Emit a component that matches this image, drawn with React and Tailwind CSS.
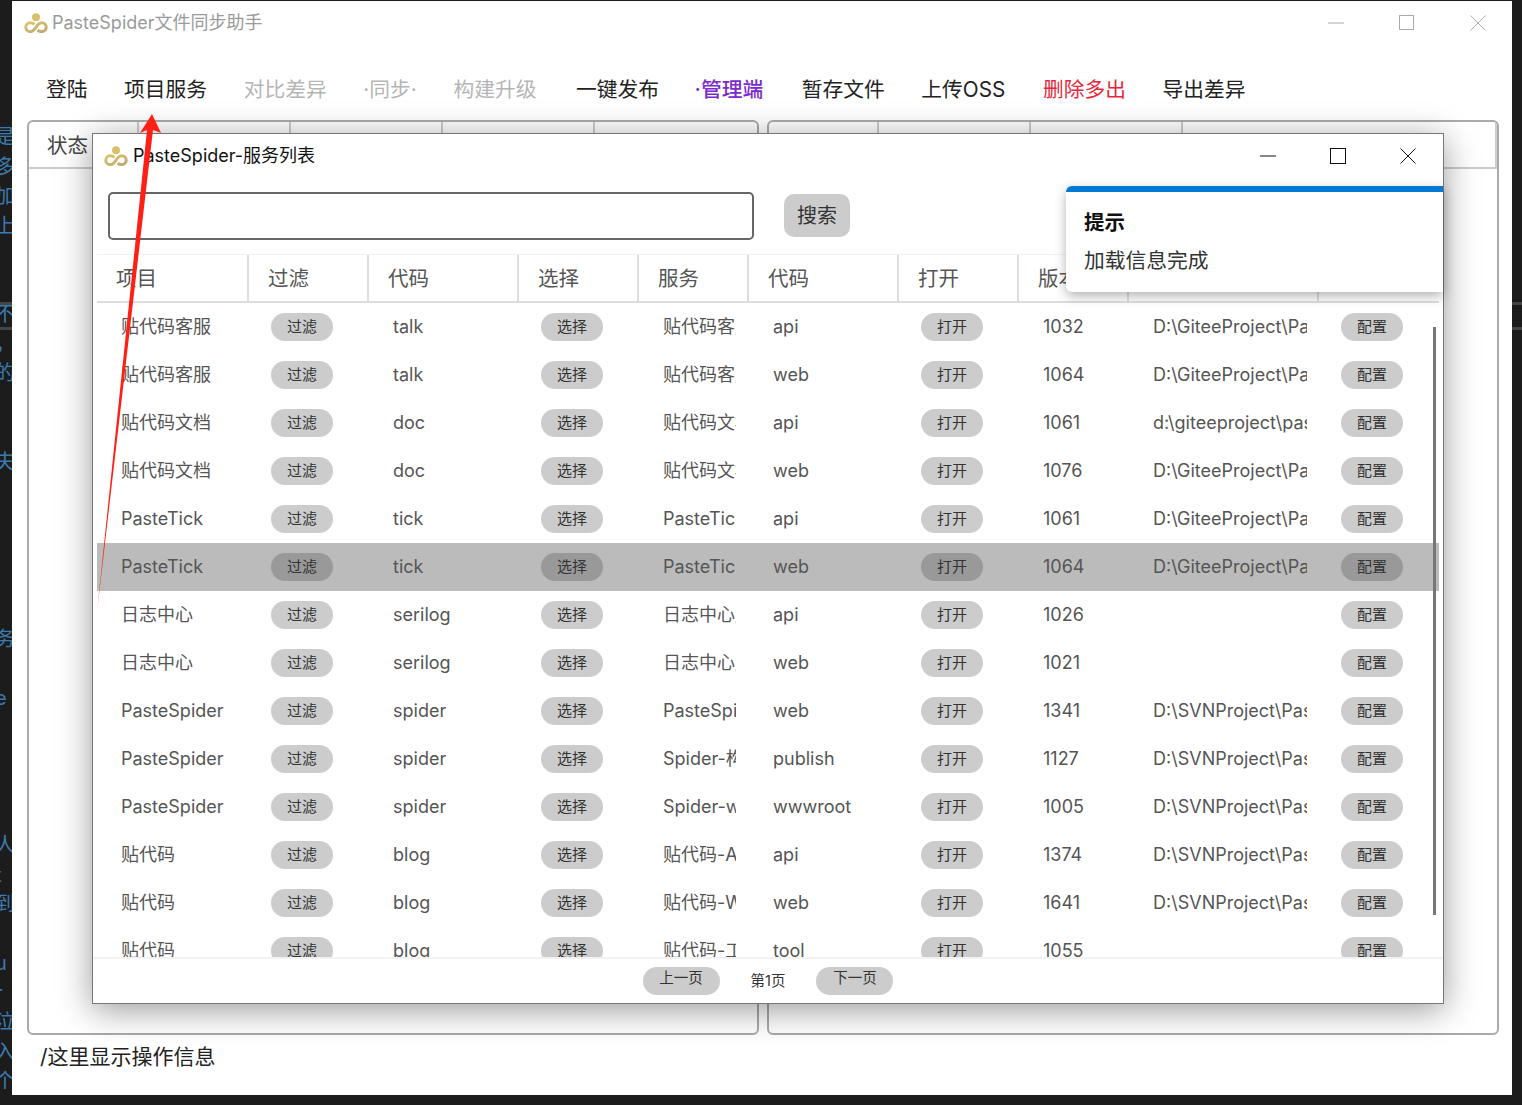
import React from "react";

const FONT = "font-['Inter','Noto_Sans_CJK_SC',sans-serif]";

const menu = [
  { label: "登陆", color: "text-[#222]" },
  { label: "项目服务", color: "text-[#222]" },
  { label: "对比差异", color: "text-[#b5b5b5]" },
  { label: "·同步·", color: "text-[#b5b5b5]" },
  { label: "构建升级", color: "text-[#b5b5b5]" },
  { label: "一键发布", color: "text-[#222] ml-[3px]" },
  { label: "·管理端", color: "text-[#7a2bd0] font-medium -ml-[1px]" },
  { label: "暂存文件", color: "text-[#222] ml-[2px]" },
  { label: "上传OSS", color: "text-[#222]" },
  { label: "删除多出", color: "text-[#e6283c] ml-[1px]" },
  { label: "导出差异", color: "text-[#222]" },
];

const headers = [
  { label: "项目", w: "w-[152px]", pl: "pl-[19px]" },
  { label: "过滤", w: "w-[120px]", pl: "pl-[19px]" },
  { label: "代码", w: "w-[150px]", pl: "pl-[19px]" },
  { label: "选择", w: "w-[120px]", pl: "pl-[19px]" },
  { label: "服务", w: "w-[110px]", pl: "pl-[19px]" },
  { label: "代码", w: "w-[150px]", pl: "pl-[19px]" },
  { label: "打开", w: "w-[120px]", pl: "pl-[19px]" },
  { label: "版本", w: "w-[110px]", pl: "pl-[19px]" },
  { label: "", w: "w-[190px]", pl: "pl-[19px]" },
  { label: "", w: "w-[120px]", pl: "pl-[19px]", last: true },
];

const rows = [
  ["贴代码客服", "talk", "贴代码客服", "api", "1032", "D:\\GiteeProject\\Pas"],
  ["贴代码客服", "talk", "贴代码客服", "web", "1064", "D:\\GiteeProject\\Pas"],
  ["贴代码文档", "doc", "贴代码文档", "api", "1061", "d:\\giteeproject\\paste"],
  ["贴代码文档", "doc", "贴代码文档", "web", "1076", "D:\\GiteeProject\\Pas"],
  ["PasteTick", "tick", "PasteTick", "api", "1061", "D:\\GiteeProject\\Pas"],
  ["PasteTick", "tick", "PasteTick", "web", "1064", "D:\\GiteeProject\\Pas"],
  ["日志中心", "serilog", "日志中心服务", "api", "1026", ""],
  ["日志中心", "serilog", "日志中心服务", "web", "1021", ""],
  ["PasteSpider", "spider", "PasteSpider", "web", "1341", "D:\\SVNProject\\Past"],
  ["PasteSpider", "spider", "Spider-构建", "publish", "1127", "D:\\SVNProject\\Past"],
  ["PasteSpider", "spider", "Spider-www", "wwwroot", "1005", "D:\\SVNProject\\Past"],
  ["贴代码", "blog", "贴代码-Api", "api", "1374", "D:\\SVNProject\\Past"],
  ["贴代码", "blog", "贴代码-Web", "web", "1641", "D:\\SVNProject\\Past"],
  ["贴代码", "blog", "贴代码-工具", "tool", "1055", ""],
];

// bits of the code editor showing behind the window
const editorLines = [
  "是", "多", "加", "上", "", "", "不", "，", "的", "", "", "夫", "i", "", "", ",", "", "务", "", "e",
  "", "", "", "", "人", "t", "到", "", "u", "r", "泣", "入", "个",
];

function Logo() {
  return (
    <svg width="24" height="20" viewBox="0 0 24 20" fill="none" className="shrink-0">
      <defs>
        <linearGradient id="logoGold" x1="0" y1="0" x2="1" y2="1">
          <stop offset="0" stopColor="#dcc56e" />
          <stop offset="1" stopColor="#bda873" />
        </linearGradient>
      </defs>
      <circle cx="12" cy="4.2" r="4" fill="#d8c16a" />
      <path
        d="M10.5 11.2c-1.2-.9-2.6-1.4-4.3-1.4a4.4 4.4 0 0 0 0 8.8c2.6 0 4.2-1.9 5.8-4.4 1.6-2.5 3.2-4.4 5.8-4.4a4.4 4.4 0 0 1 0 8.8c-1.7 0-3.1-.5-4.3-1.4"
        stroke="url(#logoGold)"
        strokeWidth="3"
      />
    </svg>
  );
}

function Pill({ children, dark }) {
  return (
    <button
      className={`w-[62px] h-[28px] rounded-full text-[15px] text-[#333] flex items-center justify-center ${
        dark ? "bg-[#999]" : "bg-[#ccc]"
      }`}
    >
      {children}
    </button>
  );
}

function ServiceRow({ row, active }) {
  return (
    <div className={`flex items-center h-[48px] text-[18px] text-[#555] ${active ? "bg-[#bbb]" : ""}`}>
      <div className="w-[151px] pl-[24px] pb-[1px] truncate">{row[0]}</div>
      <div className="w-[120px] pl-[23px]"><Pill dark={active}>过滤</Pill></div>
      <div className="w-[150px] pl-[25px] pb-[1px]">{row[1]}</div>
      <div className="w-[120px] pl-[23px]"><Pill dark={active}>选择</Pill></div>
      <div className="w-[110px] pl-[25px] pr-[12px] pb-[1px]">
        <div className="overflow-hidden whitespace-nowrap">{row[2]}</div>
      </div>
      <div className="w-[150px] pl-[25px] pb-[1px]">{row[3]}</div>
      <div className="w-[120px] pl-[23px]"><Pill dark={active}>打开</Pill></div>
      <div className="w-[110px] pl-[25px] pb-[1px]">{row[4]}</div>
      <div className="w-[190px] pl-[25px] pr-[11px] pb-[1px]">
        <div className="overflow-hidden whitespace-nowrap h-[27px]">{row[5]}</div>
      </div>
      <div className="w-[121px] pl-[23px]"><Pill dark={active}>配置</Pill></div>
    </div>
  );
}

function PanelHead({ cols }) {
  return (
    <div className="flex h-[47px] border-b-2 border-[#ccc]">
      {cols.map((c, i) => (
        <div key={i} className={`${c.w} h-full border-r-2 border-[#ccc] pl-[18px] pt-[9px] text-[20.5px] text-[#444]`}>
          {c.label}
        </div>
      ))}
    </div>
  );
}

export default function App() {
  const leftCols = [
    { label: "状态", w: "w-[110px]" },
    { label: "", w: "w-[152px]" },
    { label: "", w: "w-[152px]" },
    { label: "", w: "w-[152px]" },
  ];
  const rightCols = [
    { label: "", w: "w-[110px]" },
    { label: "", w: "w-[152px]" },
    { label: "", w: "w-[152px]" },
    { label: "", w: "w-[314px]" },
  ];

  return (
    <div className={`relative flex w-[1522px] h-[1105px] overflow-hidden bg-[#1c1c1c] pt-px ${FONT}`}>
      {/* editor behind */}
      <div className="relative w-[12px] shrink-0 overflow-hidden pt-[122px] text-[20px] text-[#3b7aae]">
        {editorLines.map((t, i) => (
          <div key={i} className="h-[29.5px] leading-[29.5px] whitespace-nowrap -ml-[5px]">{t}</div>
        ))}
        <div className="absolute left-0 right-0 top-[301px] h-[28px] border-y-[3px] border-[#444]" />
      </div>

      {/* main window */}
      <div className="w-[1500px] h-[1094px] shrink-0 bg-white flex flex-col">
        <div className="flex items-center gap-[4px] h-[44px] pl-[12px] shrink-0">
          <Logo />
          <span className="text-[18px] text-[#9a9a9a] pb-[2px]">PasteSpider文件同步助手</span>
          <div className="ml-auto flex items-center gap-[55px] pr-[26px]">
            <svg width="16" height="16" viewBox="0 0 16 16" fill="none" stroke="#aaa"><path d="M0 8h16" /></svg>
            <svg width="16" height="16" viewBox="0 0 16 16" fill="none" stroke="#aaa"><rect x=".5" y=".5" width="14" height="14" /></svg>
            <svg width="16" height="16" viewBox="0 0 16 16" fill="none" stroke="#aaa"><path d="M.5.5l15 15M15.5.5l-15 15" /></svg>
          </div>
        </div>

        <div className="flex items-center gap-[36.6px] h-[75px] pt-[14px] pl-[34px] shrink-0 text-[20.75px]">
          {menu.map((m) => (
            <span key={m.label} className={m.color}>{m.label}</span>
          ))}
        </div>

        <div className="flex gap-[8px] ml-[15px] h-[915px] shrink-0">
          <div className="w-[732px] border-2 border-[#aaa] rounded-[6px] overflow-hidden">
            <PanelHead cols={leftCols} />
          </div>
          <div className="w-[732px] border-2 border-[#aaa] rounded-[6px] overflow-hidden">
            <PanelHead cols={rightCols} />
          </div>
        </div>

        <div className="pl-[28px] pt-[6px] text-[21px] text-[#222]">/这里显示操作信息</div>
      </div>

      <div className="flex-1 flex flex-col pt-[301px]">
        <div className="h-[28px] border-y-[3px] border-[#444]" />
      </div>

      {/* service list dialog */}
      <div className="absolute left-[92px] top-[133px] w-[1352px] h-[871px] bg-white border border-[#777] shadow-[0_6px_32px_rgba(0,0,0,0.4)] flex flex-col">
        <div className="flex items-center gap-[5px] h-[44px] pl-[11px] shrink-0">
          <Logo />
          <span className="text-[18px] text-[#111] pb-[2px]">PasteSpider-服务列表</span>
          <div className="ml-auto flex items-center gap-[54px] pr-[27px]">
            <svg width="16" height="16" viewBox="0 0 16 16" fill="none" stroke="#111"><path d="M0 8h16" /></svg>
            <svg width="16" height="16" viewBox="0 0 16 16" fill="none" stroke="#111"><rect x=".5" y=".5" width="15" height="15" /></svg>
            <svg width="16" height="16" viewBox="0 0 16 16" fill="none" stroke="#111"><path d="M.5.5l15 15M15.5.5l-15 15" /></svg>
          </div>
        </div>

        <div className="flex items-center gap-[30px] pl-[15px] pt-[14px] shrink-0">
          <div className="w-[646px] h-[48px] border-2 border-[#666] rounded-[5px]" />
          <button className="w-[66px] h-[43px] bg-[#ccc] rounded-[10px] text-[20px] text-[#333] pt-[1px] -mt-[2px]">搜索</button>
        </div>

        <div className="mt-[14px] mx-[4px] flex h-[49px] shrink-0 border-t border-[#f2f2f2] border-b-2 border-b-[#ddd]">
          {headers.map((h, i) => (
            <div
              key={i}
              className={`${h.w} ${h.pl} flex items-center pt-[2px] text-[20.5px] text-[#555] ${h.last ? "" : "border-r-2 border-[#ddd]"}`}
            >
              {h.label}
            </div>
          ))}
        </div>

        <div className="relative mx-[4px] h-[654px] shrink-0 overflow-hidden">
          {rows.map((r, i) => (
            <ServiceRow key={i} row={r} active={i === 5} />
          ))}
          <div className="absolute right-[3px] top-[24px] w-[3px] h-[588px] bg-[#777]" />
        </div>

        <div className="flex-1 border-t-2 border-[#f2f2f2] flex items-center justify-center gap-[31px] text-[14.5px] text-[#333]">
          <button className="w-[77px] h-[28px] rounded-full bg-[#ccc] pb-[6px]">上一页</button>
          <span>第1页</span>
          <button className="w-[77px] h-[28px] rounded-full bg-[#ccc] pb-[6px]">下一页</button>
        </div>

        {/* toast */}
        <div className="absolute right-0 top-[52px] w-[377px] h-[106px] bg-white border-t-[6px] border-[#0078d4] rounded-l-[6px] shadow-[0_4px_12px_rgba(0,0,0,0.3)] pl-[18px] pt-[15px]">
          <div className="text-[20.5px] font-bold text-[#111] leading-[32px]">提示</div>
          <div className="text-[20.75px] text-[#333] mt-[6px] leading-[32px]">加载信息完成</div>
        </div>
      </div>

      {/* red annotation arrow */}
      <svg className="absolute left-0 top-0 pointer-events-none" width="200" height="640" viewBox="0 0 200 640">
        <polygon points="152,114 161,133 153,130 97,612 147,130 140,133" fill="#ff2015" />
      </svg>
    </div>
  );
}
